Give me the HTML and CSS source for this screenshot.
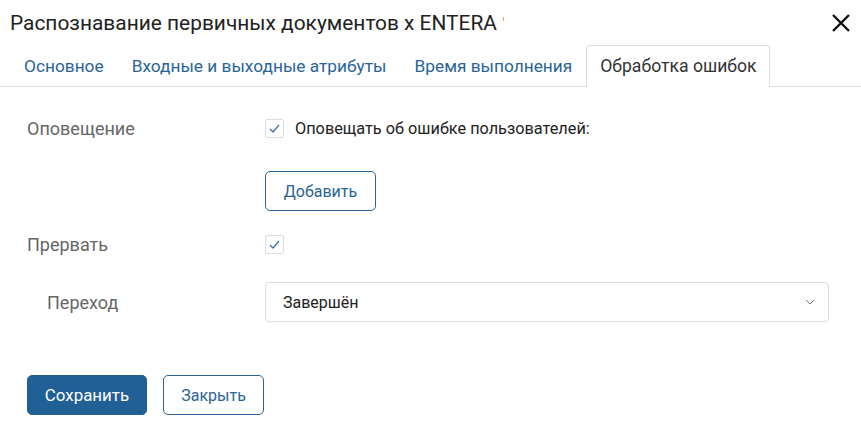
FILE: index.html
```html
<!DOCTYPE html>
<html lang="ru">
<head>
<meta charset="utf-8">
<link rel="stylesheet" href="styles.css">
</head>
<body>
<div class="dialog">
  <div class="header">
    <div class="title">Распознавание первичных документов x ENTERA<span class="mark"></span></div>
    <button class="close" aria-label="Закрыть">
      <svg width="20" height="20" viewBox="0 0 20 20"><path d="M2 2 L18 18 M18 2 L2 18" stroke="#111" stroke-width="2.4" fill="none"/></svg>
    </button>
  </div>
  <div class="tabs">
    <div class="tab">Основное</div>
    <div class="tab">Входные и выходные атрибуты</div>
    <div class="tab">Время выполнения</div>
    <div class="tab active">Обработка ошибок</div>
  </div>
  <div class="form">
    <div class="row r1">
      <div class="label">Оповещение</div>
      <div class="control">
        <span class="checkbox"><svg width="13" height="13" viewBox="0 0 13 13"><path d="M2 7 L5 10 L11 3" stroke="#3a6ea5" stroke-width="1.2" fill="none"/></svg></span>
        <span class="cb-text">Оповещать об ошибке пользователей:</span>
      </div>
    </div>
    <div class="row r2">
      <div class="label"></div>
      <div class="control"><button class="btn btn-outline add">Добавить</button></div>
    </div>
    <div class="row r3">
      <div class="label">Прервать</div>
      <div class="control">
        <span class="checkbox"><svg width="13" height="13" viewBox="0 0 13 13"><path d="M2 7 L5 10 L11 3" stroke="#3a6ea5" stroke-width="1.2" fill="none"/></svg></span>
      </div>
    </div>
    <div class="row r4">
      <div class="label sub">Переход</div>
      <div class="control">
        <div class="select">
          <span>Завершён</span>
          <svg width="10" height="6" viewBox="0 0 10 6"><path d="M1 1 L5 5 L9 1" stroke="#777" stroke-width="1" fill="none"/></svg>
        </div>
      </div>
    </div>
  </div>
  <div class="footer">
    <button class="btn btn-primary">Сохранить</button>
    <button class="btn btn-outline close-btn">Закрыть</button>
  </div>
</div>
</body>
</html>
```
FILE: styles.css
```css
* { box-sizing: border-box; }
html, body { margin: 0; padding: 0; background: #fff; }
body { font-family: Roboto, "Noto Sans", sans-serif; color: #333; width: 861px; height: 423px; overflow: hidden; }
.header { display: flex; justify-content: space-between; align-items: center; padding: 5px 10px 0 10px; height: 40px; }
.title { font-size: 20.9px; color: #222; display: flex; align-items: flex-start; }
.mark { display: inline-block; width: 1px; height: 4px; background: #f0a050; margin-left: 6px; margin-top: 6px; }
.close { background: none; border: 0; padding: 0; width: 20px; height: 20px; margin-right: 0; margin-top: 0; }
.tabs { display: flex; padding: 0 10px; margin-top: 5px; border-bottom: 1px solid #dcdde2; height: 42px; }
.tab { padding: 0 13px; font-size: 17.3px; color: #2a6496; height: 41px; line-height: 41px; border: 1px solid transparent; border-bottom: 0; }
.tab.active { color: #333; border-color: #dcdde2; border-radius: 4px 4px 0 0; background: #fff; height: 42px; padding: 0 12px 0 13px; font-size: 17.6px; }
.form { padding: 0 32px 0 27px; }
.row { display: flex; align-items: center; }
.label { width: 238px; font-size: 18px; color: #666; }
.label.sub { padding-left: 20px; }
.control { flex: 1; display: flex; align-items: center; }
.r1 { margin-top: 23px; height: 36px; }
.r2 { margin-top: 25px; height: 40px; }
.r3 { margin-top: 15px; height: 36px; }
.r4 { margin-top: 20px; height: 40px; }
.checkbox { width: 19px; height: 19px; border: 1px solid #dcdcdc; border-radius: 2px; display: inline-flex; align-items: center; justify-content: center; }
.cb-text { margin-left: 11px; font-size: 16.3px; color: #222; }
.btn { font-family: Roboto, "Noto Sans", sans-serif; font-size: 16px; height: 40px; border-radius: 5px; padding: 0; }
.btn-outline { background: #fff; border: 1px solid #2a6496; color: #2a6496; }
.btn-primary { background: #216095; border: 1px solid #216095; color: #fff; width: 120px; font-size: 16.9px; }
.add { width: 111px; }
.close-btn { width: 101px; }
.select { width: 100%; height: 40px; border: 1px solid #dcdcdc; border-radius: 4px; display: flex; align-items: center; justify-content: space-between; padding: 0 13px 0 17px; font-size: 16px; color: #222; }
.footer { display: flex; gap: 16px; padding-left: 27px; margin-top: 53px; }
```
